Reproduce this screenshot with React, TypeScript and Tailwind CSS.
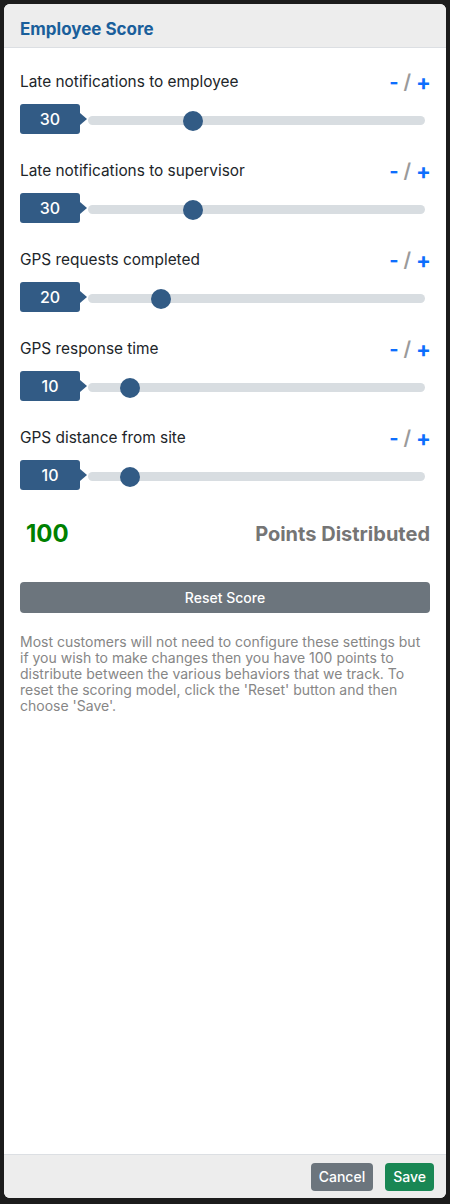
import React from 'react';

/* ─── Data ───────────────────────────────────────────────────────────────── */

const BEHAVIORS: { label: string; value: number }[] = [
  { label: 'Late notifications to employee', value: 30 },
  { label: 'Late notifications to supervisor', value: 30 },
  { label: 'GPS requests completed', value: 20 },
  { label: 'GPS response time', value: 10 },
  { label: 'GPS distance from site', value: 10 },
];

const FONT = "font-['Inter','Liberation_Sans',sans-serif]";

/* ─── ScoreRow ───────────────────────────────────────────────────────────── */

function ScoreRow({ label, value }: { label: string; value: number }) {
  return (
    <div className="flex flex-col">
      <div className="flex items-center justify-between h-[24px]">
        <span className="text-[15.4px] text-[#212529] leading-none">{label}</span>
        <span className="flex items-center gap-[5px] text-[20px] font-bold leading-none -mr-[1px]">
          <span className="text-[#0d6efd]">-</span>
          <span className="text-[#9a9a9a] font-semibold">/</span>
          <span className="text-[#0d6efd] text-[22px]">+</span>
        </span>
      </div>

      <div className="flex items-center mt-[10px] h-[30px]">
        {/* Value badge */}
        <div className="relative w-[60px] h-[30px] rounded-[3px] bg-[#325b85] flex items-center justify-center text-white text-[16px] font-medium shrink-0">
          {value}
          <span className="absolute right-[-7px] top-1/2 -translate-y-1/2 w-0 h-0 border-y-[6px] border-y-transparent border-l-[7px] border-l-[#325b85]" />
        </div>

        {/* Track */}
        <div className="relative ml-[8px] w-[337px] h-[9px] rounded-full bg-[#d8dde1] mt-[3px]">
          <div
            className="absolute top-1/2 w-[20px] h-[20px] -translate-y-1/2 rounded-full bg-[#325b85]"
            style={{ left: `${(value / 100) * 317}px` }}
          />
        </div>
      </div>
    </div>
  );
}

/* ─── App ────────────────────────────────────────────────────────────────── */

export default function App() {
  return (
    <div className={`${FONT} w-[450px] h-[1204px] bg-[#1c1c1c] pt-[4px] pl-[4px] pr-[4px] pb-[6px]`}>
      <div className="h-full rounded-[6px] bg-white flex flex-col overflow-hidden">
        {/* Header */}
        <div className="h-[44px] shrink-0 bg-[#ededed] border-b border-[#dcdfe3] flex items-center px-[16px] pt-[7px]">
          <h1 className="text-[17px] font-bold text-[#1a5f9b] leading-none">Employee Score</h1>
        </div>

        {/* Body */}
        <div className="flex-1 px-[16px] pt-[22px]">
          <div className="flex flex-col gap-[25px]">
            {BEHAVIORS.map((b) => (
              <ScoreRow key={b.label} label={b.label} value={b.value} />
            ))}
          </div>

          <div className="flex items-center justify-between mt-[29px] h-[30px]">
            <span className="ml-[6px] text-[24px] font-bold text-[#008000] leading-none">100</span>
            <span className="text-[20px] font-bold text-[#757575] leading-none">Points Distributed</span>
          </div>

          <button
            type="button"
            className="mt-[33px] w-full h-[31px] rounded-[4px] bg-[#6c757d] text-white text-[14px] font-medium"
          >
            Reset Score
          </button>

          <p className="mt-[21px] text-[14px] leading-[16px] text-[#868686]">
            Most customers will not need to configure these settings but if you wish to make changes then you
            have 100 points to distribute between the various behaviors that we track. To reset the scoring
            model, click the 'Reset' button and then choose 'Save'.
          </p>
        </div>

        {/* Footer */}
        <div className="h-[44px] shrink-0 bg-[#ededed] border-t border-[#dcdfe3] flex items-center justify-end gap-[12px] pr-[12px]">
          <button type="button" className="h-[28px] px-[8px] rounded-[4px] bg-[#6c757d] text-white text-[14px] font-medium">
            Cancel
          </button>
          <button type="button" className="h-[28px] px-[8px] rounded-[4px] bg-[#198754] text-white text-[14px] font-medium">
            Save
          </button>
        </div>
      </div>
    </div>
  );
}
